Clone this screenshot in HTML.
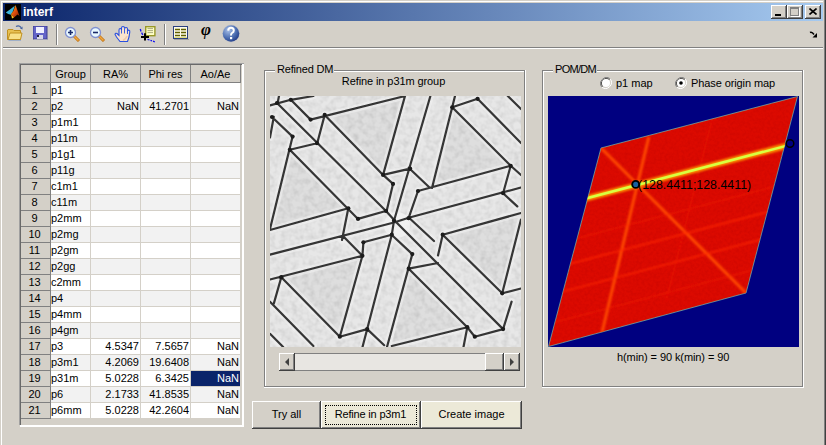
<!DOCTYPE html>
<html><head><meta charset="utf-8"><style>
html,body{margin:0;padding:0;}
body{width:826px;height:445px;overflow:hidden;background:#d4d0c8;position:relative;font-family:"Liberation Sans",sans-serif;font-size:11px;color:#000;}
body div{position:absolute;}
.t{white-space:nowrap;}
.c{text-align:center;}
.r{text-align:right;}
svg{display:block;}
</style></head><body>
<div style="left:0px;top:0px;width:826px;height:1px;background:#d4d0c8;"></div>
<div style="left:1px;top:1px;width:822px;height:1px;background:#fff;"></div>
<div style="left:1px;top:1px;width:1px;height:444px;background:#fff;"></div>
<div style="left:824px;top:0px;width:1px;height:445px;background:#808080;"></div>
<div style="left:825px;top:0px;width:1px;height:445px;background:#404040;"></div>
<div style="left:3px;top:3px;width:820px;height:18px;background:linear-gradient(to right,#0a246a,#a6caf0);"></div>
<div style="left:5px;top:4px;width:16px;height:16px;background:#000;"></div>
<svg style="position:absolute;left:5px;top:4px" width="16" height="16" viewBox="0 0 16 16">
<defs><linearGradient id="mg" x1="0" y1="0" x2="1" y2="1"><stop offset="0" stop-color="#ffd000"/><stop offset="0.5" stop-color="#e05010"/><stop offset="1" stop-color="#802000"/></linearGradient></defs>
<path d="M0.8 8.5 L5 5.5 L9.8 1.8 L8.2 6.8 L6 10.8 Q3 10.5 0.8 8.5 Z" fill="#3fb4d8"/>
<path d="M10.5 1 L14.5 12 L12.5 10.5 L9 13.5 L6 10 L8.5 7 Z" fill="url(#mg)"/>
<path d="M9 13.5 L7 14.5 L6 10 Z" fill="#ffc020"/>
</svg>
<div class="t" style="left:23px;top:3px;color:#fff;font-weight:bold;font-size:12px;line-height:18px;">interf</div>
<div style="left:771px;top:5px;width:16px;height:14px;background:#d4d0c8;box-shadow:inset -1px -1px #404040, inset 1px 1px #fff, inset -2px -2px #808080, inset 2px 2px #d4d0c8;"><div style="left:4px;top:9px;width:6px;height:2px;background:#000;"></div></div>
<div style="left:787px;top:5px;width:16px;height:14px;background:#d4d0c8;box-shadow:inset -1px -1px #404040, inset 1px 1px #fff, inset -2px -2px #808080, inset 2px 2px #d4d0c8;"><div style="left:3px;top:2px;width:9px;height:9px;box-sizing:border-box;border:1px solid #808080;border-top-width:2px;box-shadow:1px 1px #fff;"></div></div>
<div style="left:805px;top:5px;width:16px;height:14px;background:#d4d0c8;box-shadow:inset -1px -1px #404040, inset 1px 1px #fff, inset -2px -2px #808080, inset 2px 2px #d4d0c8;"><svg style="position:absolute;left:4px;top:3px" width="8" height="7"><path d="M0.5 0.5 L7.5 6.5 M7.5 0.5 L0.5 6.5" stroke="#000" stroke-width="1.6"/></svg></div>
<div style="left:3px;top:47px;width:820px;height:1px;background:#808080;"></div>
<div style="left:3px;top:48px;width:820px;height:1px;background:#fff;"></div>
<div style="left:56px;top:24px;width:1px;height:21px;background:#808080;"></div>
<div style="left:57px;top:24px;width:1px;height:21px;background:#fff;"></div>
<div style="left:164px;top:24px;width:1px;height:21px;background:#808080;"></div>
<div style="left:165px;top:24px;width:1px;height:21px;background:#fff;"></div>
<svg style="position:absolute;left:6px;top:25px" width="18" height="17" viewBox="0 0 18 17">
<path d="M15 2.5 Q13 0 10 1.5" stroke="#4060a0" stroke-width="1.3" fill="none"/>
<path d="M14 3.5 L16.5 1.5 L16.5 4.5 Z" fill="#4060a0"/>
<path d="M2 4.5 L7 4.5 L8 5.5 L14.5 5.5 L14.5 14.5 L1.5 14.5 L1.5 5 Z" fill="#e8c050" stroke="#c09020" stroke-width="1"/>
<path d="M2 14.5 L4 8 L16 8 L14.5 14.5 Z" fill="#f8e088" stroke="#c09020" stroke-width="1"/>
<path d="M2.5 15.5 L15 15.5" stroke="#a0b0c8" stroke-width="1"/>
</svg>
<svg style="position:absolute;left:33px;top:26px" width="15" height="14" viewBox="0 0 15 14">
<rect x="0" y="0" width="14" height="13" fill="#6464c8"/>
<rect x="0" y="0" width="14" height="13" fill="none" stroke="#3c3c90" stroke-width="1"/>
<rect x="3" y="1" width="8" height="6" fill="#f0f0ff"/>
<rect x="4" y="9" width="6" height="4" fill="#d8d8e8"/>
<rect x="4" y="9" width="2" height="2" fill="#202040"/>
<rect x="1" y="13" width="14" height="1" fill="#a0a0b8"/>
</svg>
<svg style="position:absolute;left:63px;top:25px" width="18" height="17" viewBox="0 0 18 17">
<path d="M11 11 L16 16" stroke="#c07010" stroke-width="3"/><path d="M11 11 L15.5 15.5" stroke="#f0a840" stroke-width="1.6"/>
<circle cx="7.5" cy="7.5" r="5" fill="#e8f8ff" stroke="#8090d0" stroke-width="1.3"/><path d="M5 7.5 H10 M7.5 5 V10" stroke="#1a2a6a" stroke-width="1.6"/></svg>
<svg style="position:absolute;left:88px;top:25px" width="18" height="17" viewBox="0 0 18 17">
<path d="M11 11 L16 16" stroke="#c07010" stroke-width="3"/><path d="M11 11 L15.5 15.5" stroke="#f0a840" stroke-width="1.6"/>
<circle cx="7.5" cy="7.5" r="5" fill="#e8f8ff" stroke="#8090d0" stroke-width="1.3"/><path d="M5 7.5 H10" stroke="#1a2a6a" stroke-width="1.6"/></svg>
<svg style="position:absolute;left:114px;top:25px" width="18" height="18" viewBox="0 0 18 18">
<path d="M6 16.5 L2.5 12 L1 9.2 Q1.5 7.6 3 8.5 L5 10.5 L5 5 Q5 3.5 6.3 3.5 Q7.5 3.5 7.5 5 L7.5 3 Q7.5 1.5 9 1.5 Q10.5 1.5 10.5 3 L10.5 3.5 Q11 2.5 12.2 2.5 Q13.5 2.5 13.5 4 L13.5 6 Q14.2 5 15 5.2 Q16 5.5 15.8 6.8 L15 12 L13.5 16.5 Z" fill="#fbe4cc" stroke="#2a50e0" stroke-width="1.1"/>
<path d="M7.5 5 L7.5 8.5 M10.5 3.5 L10.5 8.5 M13.5 6 L13.5 9" stroke="#2a50e0" stroke-width="0.9"/>
<path d="M9 15.5 Q12 14 13 11" stroke="#e8b890" stroke-width="1.5" fill="none" opacity="0.6"/>
</svg>
<svg style="position:absolute;left:139px;top:25px" width="18" height="18" viewBox="0 0 18 18">
<path d="M1.3 4 L2 6.5 M2.6 7.6 L3.8 10" stroke="#1010f0" stroke-width="1.3"/>
<path d="M8.5 14.3 L10.5 15 M11.5 15.4 L13 15.9 M14 16.2 L15.8 16.8" stroke="#1010f0" stroke-width="1.3"/>
<rect x="6.7" y="1.7" width="9.2" height="9" fill="#ffffc8" stroke="#989828" stroke-width="1.4"/>
<path d="M8.5 3.6 H14 M8.5 5.6 H14 M8.5 7.6 H14" stroke="#a0a078" stroke-width="0.9"/>
<path d="M6 8.2 V15.6 M2 11.9 H10" stroke="#000" stroke-width="2"/>
</svg>
<svg style="position:absolute;left:173px;top:26px" width="16" height="14" viewBox="0 0 16 14">
<rect x="0.5" y="0.5" width="14" height="12" fill="#fff" stroke="#2a4080" stroke-width="1"/>
<rect x="1" y="1" width="13" height="11" fill="#fffce8"/><path d="M2 3.5 H7 M8 3.5 H13 M2 6.5 H7 M8 6.5 H13 M2 9.5 H7 M8 9.5 H13" stroke="#606000" stroke-width="1.6"/>
<path d="M1 11.5 H14" stroke="#e0e080" stroke-width="1"/>
<rect x="1" y="13" width="15" height="1" fill="#a0a0a0"/>
</svg>
<div class="t" style="left:201px;top:20px;font-family:'Liberation Serif',serif;font-style:italic;font-weight:bold;font-size:17px;line-height:20px;color:#000;">&#966;</div>
<svg style="position:absolute;left:221px;top:24px" width="20" height="19" viewBox="0 0 20 19">
<defs><radialGradient id="hg" cx="0.35" cy="0.3" r="0.8"><stop offset="0" stop-color="#a8c0e8"/><stop offset="0.6" stop-color="#4a6cb0"/><stop offset="1" stop-color="#1c3480"/></radialGradient></defs>
<circle cx="10" cy="9.5" r="9" fill="#c8c8c8"/>
<circle cx="10" cy="9.5" r="8.3" fill="url(#hg)"/>
<path d="M7.2 6.6 Q7.3 3.8 10 3.8 Q12.8 3.8 12.8 6.4 Q12.8 8 11 9 Q10 9.6 10 11.5" stroke="#fff" stroke-width="2" fill="none"/>
<rect x="9" y="13" width="2.2" height="2.2" fill="#fff"/>
</svg>
<svg style="position:absolute;left:809px;top:31px" width="9" height="7" viewBox="0 0 9 7">
<path d="M1 1.5 Q3 0.5 5 3.5" stroke="#000" stroke-width="1.5" fill="none"/>
<path d="M3.5 6.5 L8 6.5 L8 2 Z" fill="#000"/>
</svg>
<div style="left:19px;top:63px;width:225px;height:1px;background:#a0a0a0;"></div>
<div style="left:19px;top:63px;width:1px;height:362px;background:#a0a0a0;"></div>
<div style="left:20px;top:64px;width:222px;height:1px;background:#696969;"></div>
<div style="left:20px;top:64px;width:1px;height:361px;background:#696969;"></div>
<div style="left:242px;top:64px;width:2px;height:363px;background:#fff;"></div>
<div style="left:20px;top:425px;width:224px;height:2px;background:#fff;"></div>
<div style="left:21px;top:82px;width:220px;height:1px;background:#808080;"></div>
<div style="left:50px;top:65px;width:1px;height:17px;background:#808080;"></div>
<div style="left:90px;top:65px;width:1px;height:17px;background:#808080;"></div>
<div style="left:140px;top:65px;width:1px;height:17px;background:#808080;"></div>
<div style="left:190px;top:65px;width:1px;height:17px;background:#808080;"></div>
<div style="left:240px;top:65px;width:1px;height:17px;background:#808080;"></div>
<div class="t c" style="left:51px;top:65px;width:39px;line-height:18px;">Group</div>
<div class="t c" style="left:91px;top:65px;width:49px;line-height:18px;">RA%</div>
<div class="t c" style="left:141px;top:65px;width:49px;line-height:18px;">Phi res</div>
<div class="t c" style="left:191px;top:65px;width:49px;line-height:18px;">Ao/Ae</div>
<div style="left:51px;top:83px;width:189px;height:15px;background:#fff;"></div>
<div style="left:21px;top:98px;width:30px;height:1px;background:#808080;"></div>
<div style="left:51px;top:98px;width:190px;height:1px;background:#d4d0c8;"></div>
<div class="t c" style="left:20px;top:83px;width:29px;line-height:15px;">1</div>
<div class="t" style="left:51px;top:83px;line-height:15px;">p1</div>
<div style="left:51px;top:99px;width:189px;height:15px;background:#f2f2f2;"></div>
<div style="left:21px;top:114px;width:30px;height:1px;background:#808080;"></div>
<div style="left:51px;top:114px;width:190px;height:1px;background:#d4d0c8;"></div>
<div class="t c" style="left:20px;top:99px;width:29px;line-height:15px;">2</div>
<div class="t" style="left:51px;top:99px;line-height:15px;">p2</div>
<div class="t r" style="left:91px;top:99px;width:48px;line-height:15px;">NaN</div>
<div class="t r" style="left:141px;top:99px;width:48px;line-height:15px;">41.2701</div>
<div class="t r" style="left:191px;top:99px;width:48px;line-height:15px;">NaN</div>
<div style="left:51px;top:115px;width:189px;height:15px;background:#fff;"></div>
<div style="left:21px;top:130px;width:30px;height:1px;background:#808080;"></div>
<div style="left:51px;top:130px;width:190px;height:1px;background:#d4d0c8;"></div>
<div class="t c" style="left:20px;top:115px;width:29px;line-height:15px;">3</div>
<div class="t" style="left:51px;top:115px;line-height:15px;">p1m1</div>
<div style="left:51px;top:131px;width:189px;height:15px;background:#f2f2f2;"></div>
<div style="left:21px;top:146px;width:30px;height:1px;background:#808080;"></div>
<div style="left:51px;top:146px;width:190px;height:1px;background:#d4d0c8;"></div>
<div class="t c" style="left:20px;top:131px;width:29px;line-height:15px;">4</div>
<div class="t" style="left:51px;top:131px;line-height:15px;">p11m</div>
<div style="left:51px;top:147px;width:189px;height:15px;background:#fff;"></div>
<div style="left:21px;top:162px;width:30px;height:1px;background:#808080;"></div>
<div style="left:51px;top:162px;width:190px;height:1px;background:#d4d0c8;"></div>
<div class="t c" style="left:20px;top:147px;width:29px;line-height:15px;">5</div>
<div class="t" style="left:51px;top:147px;line-height:15px;">p1g1</div>
<div style="left:51px;top:163px;width:189px;height:15px;background:#f2f2f2;"></div>
<div style="left:21px;top:178px;width:30px;height:1px;background:#808080;"></div>
<div style="left:51px;top:178px;width:190px;height:1px;background:#d4d0c8;"></div>
<div class="t c" style="left:20px;top:163px;width:29px;line-height:15px;">6</div>
<div class="t" style="left:51px;top:163px;line-height:15px;">p11g</div>
<div style="left:51px;top:179px;width:189px;height:15px;background:#fff;"></div>
<div style="left:21px;top:194px;width:30px;height:1px;background:#808080;"></div>
<div style="left:51px;top:194px;width:190px;height:1px;background:#d4d0c8;"></div>
<div class="t c" style="left:20px;top:179px;width:29px;line-height:15px;">7</div>
<div class="t" style="left:51px;top:179px;line-height:15px;">c1m1</div>
<div style="left:51px;top:195px;width:189px;height:15px;background:#f2f2f2;"></div>
<div style="left:21px;top:210px;width:30px;height:1px;background:#808080;"></div>
<div style="left:51px;top:210px;width:190px;height:1px;background:#d4d0c8;"></div>
<div class="t c" style="left:20px;top:195px;width:29px;line-height:15px;">8</div>
<div class="t" style="left:51px;top:195px;line-height:15px;">c11m</div>
<div style="left:51px;top:211px;width:189px;height:15px;background:#fff;"></div>
<div style="left:21px;top:226px;width:30px;height:1px;background:#808080;"></div>
<div style="left:51px;top:226px;width:190px;height:1px;background:#d4d0c8;"></div>
<div class="t c" style="left:20px;top:211px;width:29px;line-height:15px;">9</div>
<div class="t" style="left:51px;top:211px;line-height:15px;">p2mm</div>
<div style="left:51px;top:227px;width:189px;height:15px;background:#f2f2f2;"></div>
<div style="left:21px;top:242px;width:30px;height:1px;background:#808080;"></div>
<div style="left:51px;top:242px;width:190px;height:1px;background:#d4d0c8;"></div>
<div class="t c" style="left:20px;top:227px;width:29px;line-height:15px;">10</div>
<div class="t" style="left:51px;top:227px;line-height:15px;">p2mg</div>
<div style="left:51px;top:243px;width:189px;height:15px;background:#fff;"></div>
<div style="left:21px;top:258px;width:30px;height:1px;background:#808080;"></div>
<div style="left:51px;top:258px;width:190px;height:1px;background:#d4d0c8;"></div>
<div class="t c" style="left:20px;top:243px;width:29px;line-height:15px;">11</div>
<div class="t" style="left:51px;top:243px;line-height:15px;">p2gm</div>
<div style="left:51px;top:259px;width:189px;height:15px;background:#f2f2f2;"></div>
<div style="left:21px;top:274px;width:30px;height:1px;background:#808080;"></div>
<div style="left:51px;top:274px;width:190px;height:1px;background:#d4d0c8;"></div>
<div class="t c" style="left:20px;top:259px;width:29px;line-height:15px;">12</div>
<div class="t" style="left:51px;top:259px;line-height:15px;">p2gg</div>
<div style="left:51px;top:275px;width:189px;height:15px;background:#fff;"></div>
<div style="left:21px;top:290px;width:30px;height:1px;background:#808080;"></div>
<div style="left:51px;top:290px;width:190px;height:1px;background:#d4d0c8;"></div>
<div class="t c" style="left:20px;top:275px;width:29px;line-height:15px;">13</div>
<div class="t" style="left:51px;top:275px;line-height:15px;">c2mm</div>
<div style="left:51px;top:291px;width:189px;height:15px;background:#f2f2f2;"></div>
<div style="left:21px;top:306px;width:30px;height:1px;background:#808080;"></div>
<div style="left:51px;top:306px;width:190px;height:1px;background:#d4d0c8;"></div>
<div class="t c" style="left:20px;top:291px;width:29px;line-height:15px;">14</div>
<div class="t" style="left:51px;top:291px;line-height:15px;">p4</div>
<div style="left:51px;top:307px;width:189px;height:15px;background:#fff;"></div>
<div style="left:21px;top:322px;width:30px;height:1px;background:#808080;"></div>
<div style="left:51px;top:322px;width:190px;height:1px;background:#d4d0c8;"></div>
<div class="t c" style="left:20px;top:307px;width:29px;line-height:15px;">15</div>
<div class="t" style="left:51px;top:307px;line-height:15px;">p4mm</div>
<div style="left:51px;top:323px;width:189px;height:15px;background:#f2f2f2;"></div>
<div style="left:21px;top:338px;width:30px;height:1px;background:#808080;"></div>
<div style="left:51px;top:338px;width:190px;height:1px;background:#d4d0c8;"></div>
<div class="t c" style="left:20px;top:323px;width:29px;line-height:15px;">16</div>
<div class="t" style="left:51px;top:323px;line-height:15px;">p4gm</div>
<div style="left:51px;top:339px;width:189px;height:15px;background:#fff;"></div>
<div style="left:21px;top:354px;width:30px;height:1px;background:#808080;"></div>
<div style="left:51px;top:354px;width:190px;height:1px;background:#d4d0c8;"></div>
<div class="t c" style="left:20px;top:339px;width:29px;line-height:15px;">17</div>
<div class="t" style="left:51px;top:339px;line-height:15px;">p3</div>
<div class="t r" style="left:91px;top:339px;width:48px;line-height:15px;">4.5347</div>
<div class="t r" style="left:141px;top:339px;width:48px;line-height:15px;">7.5657</div>
<div class="t r" style="left:191px;top:339px;width:48px;line-height:15px;">NaN</div>
<div style="left:51px;top:355px;width:189px;height:15px;background:#f2f2f2;"></div>
<div style="left:21px;top:370px;width:30px;height:1px;background:#808080;"></div>
<div style="left:51px;top:370px;width:190px;height:1px;background:#d4d0c8;"></div>
<div class="t c" style="left:20px;top:355px;width:29px;line-height:15px;">18</div>
<div class="t" style="left:51px;top:355px;line-height:15px;">p3m1</div>
<div class="t r" style="left:91px;top:355px;width:48px;line-height:15px;">4.2069</div>
<div class="t r" style="left:141px;top:355px;width:48px;line-height:15px;">19.6408</div>
<div class="t r" style="left:191px;top:355px;width:48px;line-height:15px;">NaN</div>
<div style="left:51px;top:371px;width:189px;height:15px;background:#fff;"></div>
<div style="left:21px;top:386px;width:30px;height:1px;background:#808080;"></div>
<div style="left:51px;top:386px;width:190px;height:1px;background:#d4d0c8;"></div>
<div class="t c" style="left:20px;top:371px;width:29px;line-height:15px;">19</div>
<div class="t" style="left:51px;top:371px;line-height:15px;">p31m</div>
<div class="t r" style="left:91px;top:371px;width:48px;line-height:15px;">5.0228</div>
<div class="t r" style="left:141px;top:371px;width:48px;line-height:15px;">6.3425</div>
<div style="left:191px;top:371px;width:49px;height:15px;background:#0a246a;"></div>
<div class="t r" style="left:191px;top:371px;width:48px;line-height:15px;color:#fff;">NaN</div>
<div style="left:51px;top:387px;width:189px;height:15px;background:#f2f2f2;"></div>
<div style="left:21px;top:402px;width:30px;height:1px;background:#808080;"></div>
<div style="left:51px;top:402px;width:190px;height:1px;background:#d4d0c8;"></div>
<div class="t c" style="left:20px;top:387px;width:29px;line-height:15px;">20</div>
<div class="t" style="left:51px;top:387px;line-height:15px;">p6</div>
<div class="t r" style="left:91px;top:387px;width:48px;line-height:15px;">2.1733</div>
<div class="t r" style="left:141px;top:387px;width:48px;line-height:15px;">41.8535</div>
<div class="t r" style="left:191px;top:387px;width:48px;line-height:15px;">NaN</div>
<div style="left:51px;top:403px;width:189px;height:15px;background:#fff;"></div>
<div style="left:21px;top:418px;width:30px;height:1px;background:#808080;"></div>
<div style="left:51px;top:418px;width:190px;height:1px;background:#d4d0c8;"></div>
<div class="t c" style="left:20px;top:403px;width:29px;line-height:15px;">21</div>
<div class="t" style="left:51px;top:403px;line-height:15px;">p6mm</div>
<div class="t r" style="left:91px;top:403px;width:48px;line-height:15px;">5.0228</div>
<div class="t r" style="left:141px;top:403px;width:48px;line-height:15px;">42.2604</div>
<div class="t r" style="left:191px;top:403px;width:48px;line-height:15px;">NaN</div>
<div style="left:90px;top:83px;width:1px;height:336px;background:#d4d0c8;"></div>
<div style="left:140px;top:83px;width:1px;height:336px;background:#d4d0c8;"></div>
<div style="left:190px;top:83px;width:1px;height:336px;background:#d4d0c8;"></div>
<div style="left:240px;top:83px;width:1px;height:336px;background:#d4d0c8;"></div>
<div style="left:50px;top:83px;width:1px;height:336px;background:#808080;"></div>
<div style="left:264px;top:70px;width:11px;height:1px;background:#808080;"></div><div style="left:265px;top:71px;width:10px;height:1px;background:#fff;"></div><div style="left:334px;top:70px;width:191px;height:1px;background:#808080;"></div><div style="left:334px;top:71px;width:191px;height:1px;background:#fff;"></div><div style="left:264px;top:70px;width:1px;height:317px;background:#808080;"></div><div style="left:265px;top:71px;width:1px;height:316px;background:#fff;"></div><div style="left:524px;top:70px;width:1px;height:317px;background:#808080;"></div><div style="left:525px;top:70px;width:1px;height:318px;background:#fff;"></div><div style="left:264px;top:386px;width:261px;height:1px;background:#808080;"></div><div style="left:264px;top:387px;width:262px;height:1px;background:#fff;"></div>
<div class="t" style="left:277px;top:62px;line-height:15px;letter-spacing:-0.18px;">Refined DM</div>
<div class="t c" style="left:268px;top:74px;width:251px;line-height:15px;letter-spacing:-0.09px;">Refine in p31m group</div>
<svg style="position:absolute;left:270px;top:96px" width="251" height="251" viewBox="0 0 251 251">
<defs><filter id="dmb"><feGaussianBlur stdDeviation="0.55"/></filter>
<filter id="dmn" x="0" y="0" width="100%" height="100%"><feTurbulence type="fractalNoise" baseFrequency="0.18" numOctaves="2" seed="3"/><feColorMatrix type="matrix" values="1 0 0 0 0.36  1 0 0 0 0.36  1 0 0 0 0.36  0 0 0 0 0.3"/></filter></defs>
<rect width="251" height="251" fill="#dcdcdc"/>
<g fill="#d0d0d0"><path d="M20.0 53.0 L78.3 112.3 L2.0 133.5 Z"/><path d="M54.7 18.9 L135.0 0.0 L113.1 78.9 Z"/><path d="M11.3 181.2 L90.2 159.3 L69.8 240.7 Z"/><path d="M182.2 11.3 L240.7 69.8 L160.0 91.5 Z"/><path d="M172.7 138.7 L252.0 116.5 L232.2 197.3 Z"/><path d="M138.7 172.7 L197.3 231.2 L121.8 250.0 Z"/></g>
<rect width="251" height="251" filter="url(#dmn)"/>
<circle cx="127" cy="129" r="13" fill="#f6f6f6" opacity="0.7" filter="url(#dmb)"/>
<g filter="url(#dmb)">
<path d="M7.0 7.0L116.0 115.0 M2.0 21.0L22.6 40.6 M20.8 3.8L40.6 23.6 M54.7 18.9L113.1 78.9 M19.8 53.8L88.0 122.9 M40.6 23.6L135.0 0.0 M20.8 3.8L43.4 0.0 M19.8 53.8L47.0 47.2 M54.7 18.9L47.2 47.2 M22.6 40.6L0.0 133.0 M3.8 20.8L0.0 41.5 M0.0 9.4L20.8 3.8 M7.5 7.5L9.0 0.0 M135.0 0.0L113.1 78.9 M160.4 0.0L124.0 124.7 M185.0 0.0L162.0 92.0 M148.0 95.0L138.6 122.2 M113.1 78.9L140.1 72.6 M138.7 71.7L159.5 91.5 M182.2 11.3L207.6 2.8 M182.2 11.3L240.7 69.8 M207.6 2.8L251.0 47.0 M237.8 0.0L251.0 13.0 M148.0 95.0L240.7 69.8 M240.7 69.8L233.1 97.2 M240.7 69.8L251.0 79.0 M0.0 134.0L78.3 112.3 M0.0 158.6L124.0 126.5 M78.3 112.3L72.0 144.0 M72.7 139.7L92.4 159.8 M113.1 78.9L123.0 87.9 M123.0 87.9L116.7 114.8 M88.0 122.9L116.7 114.8 M138.7 121.7L251.0 91.5 M233.1 97.2L247.3 110.4 M172.7 138.7L251.0 117.0 M251.0 123.6L232.2 197.3 M172.7 138.7L232.2 197.3 M172.7 138.7L168.0 159.5 M0.0 183.5L92.4 159.8 M11.3 181.2L3.8 207.6 M11.3 181.2L69.8 240.7 M0.0 205.7L43.4 250.0 M0.0 237.8L13.2 251.0 M92.4 159.8L69.8 240.7 M93.4 146.3L92.4 159.8 M69.8 240.7L97.2 233.1 M121.8 138.7L92.5 251.0 M93.4 146.3L121.8 138.7 M142.3 158.1L117.0 251.0 M122.1 139.2L142.3 158.1 M139.0 121.7L164.0 145.0 M138.7 172.7L197.3 231.2 M138.7 172.7L168.0 167.0 M97.2 233.1L114.2 249.2 M121.8 250.0L197.3 231.2 M125.5 125.5L233.1 233.1 M232.2 197.3L251.0 192.5 M197.3 231.2L193.5 251.0 M197.3 231.2L204.8 240.7 M204.8 240.7L233.1 233.1 M241.6 205.7L233.1 233.1 M116.0 115.0L125.5 125.5 M124.0 124.7L121.8 138.7 M124.0 126.5L138.7 121.7" stroke="#f2f2f2" stroke-width="7" stroke-linecap="round" fill="none" opacity="0.55"/>
<path d="M7.0 7.0L116.0 115.0 M2.0 21.0L22.6 40.6 M20.8 3.8L40.6 23.6 M54.7 18.9L113.1 78.9 M19.8 53.8L88.0 122.9 M40.6 23.6L135.0 0.0 M20.8 3.8L43.4 0.0 M19.8 53.8L47.0 47.2 M54.7 18.9L47.2 47.2 M22.6 40.6L0.0 133.0 M3.8 20.8L0.0 41.5 M0.0 9.4L20.8 3.8 M7.5 7.5L9.0 0.0 M135.0 0.0L113.1 78.9 M160.4 0.0L124.0 124.7 M185.0 0.0L162.0 92.0 M148.0 95.0L138.6 122.2 M113.1 78.9L140.1 72.6 M138.7 71.7L159.5 91.5 M182.2 11.3L207.6 2.8 M182.2 11.3L240.7 69.8 M207.6 2.8L251.0 47.0 M237.8 0.0L251.0 13.0 M148.0 95.0L240.7 69.8 M240.7 69.8L233.1 97.2 M240.7 69.8L251.0 79.0 M0.0 134.0L78.3 112.3 M0.0 158.6L124.0 126.5 M78.3 112.3L72.0 144.0 M72.7 139.7L92.4 159.8 M113.1 78.9L123.0 87.9 M123.0 87.9L116.7 114.8 M88.0 122.9L116.7 114.8 M138.7 121.7L251.0 91.5 M233.1 97.2L247.3 110.4 M172.7 138.7L251.0 117.0 M251.0 123.6L232.2 197.3 M172.7 138.7L232.2 197.3 M172.7 138.7L168.0 159.5 M0.0 183.5L92.4 159.8 M11.3 181.2L3.8 207.6 M11.3 181.2L69.8 240.7 M0.0 205.7L43.4 250.0 M0.0 237.8L13.2 251.0 M92.4 159.8L69.8 240.7 M93.4 146.3L92.4 159.8 M69.8 240.7L97.2 233.1 M121.8 138.7L92.5 251.0 M93.4 146.3L121.8 138.7 M142.3 158.1L117.0 251.0 M122.1 139.2L142.3 158.1 M139.0 121.7L164.0 145.0 M138.7 172.7L197.3 231.2 M138.7 172.7L168.0 167.0 M97.2 233.1L114.2 249.2 M121.8 250.0L197.3 231.2 M125.5 125.5L233.1 233.1 M232.2 197.3L251.0 192.5 M197.3 231.2L193.5 251.0 M197.3 231.2L204.8 240.7 M204.8 240.7L233.1 233.1 M241.6 205.7L233.1 233.1 M116.0 115.0L125.5 125.5 M124.0 124.7L121.8 138.7 M124.0 126.5L138.7 121.7" stroke="#363636" stroke-width="2.2" stroke-linecap="round" fill="none"/>
<g fill="#1a1a1a"><circle cx="7.0" cy="7.0" r="2.1"/><circle cx="116.0" cy="115.0" r="2.1"/><circle cx="2.0" cy="21.0" r="2.1"/><circle cx="22.6" cy="40.6" r="2.1"/><circle cx="20.8" cy="3.8" r="2.1"/><circle cx="40.6" cy="23.6" r="2.1"/><circle cx="54.7" cy="18.9" r="2.1"/><circle cx="113.1" cy="78.9" r="2.1"/><circle cx="19.8" cy="53.8" r="2.1"/><circle cx="88.0" cy="122.9" r="2.1"/><circle cx="47.0" cy="47.2" r="2.1"/><circle cx="124.0" cy="124.7" r="2.1"/><circle cx="148.0" cy="95.0" r="2.1"/><circle cx="138.6" cy="122.2" r="2.1"/><circle cx="140.1" cy="72.6" r="2.1"/><circle cx="182.2" cy="11.3" r="2.1"/><circle cx="207.6" cy="2.8" r="2.1"/><circle cx="240.7" cy="69.8" r="2.1"/><circle cx="233.1" cy="97.2" r="2.1"/><circle cx="78.3" cy="112.3" r="2.1"/><circle cx="92.4" cy="159.8" r="2.1"/><circle cx="123.0" cy="87.9" r="2.1"/><circle cx="172.7" cy="138.7" r="2.1"/><circle cx="232.2" cy="197.3" r="2.1"/><circle cx="11.3" cy="181.2" r="2.1"/><circle cx="69.8" cy="240.7" r="2.1"/><circle cx="93.4" cy="146.3" r="2.1"/><circle cx="97.2" cy="233.1" r="2.1"/><circle cx="121.8" cy="138.7" r="2.1"/><circle cx="142.3" cy="158.1" r="2.1"/><circle cx="138.7" cy="172.7" r="2.1"/><circle cx="197.3" cy="231.2" r="2.1"/><circle cx="233.1" cy="233.1" r="2.1"/><circle cx="204.8" cy="240.7" r="2.1"/></g>
</g>
</svg>
<div style="left:279px;top:353px;width:241px;height:18px;background:#e8e6e2;"></div>
<div style="left:279px;top:353px;width:241px;height:1px;background:#808080;"></div>
<div style="left:279px;top:370px;width:241px;height:1px;background:#808080;"></div>
<div style="left:279px;top:353px;width:16px;height:18px;background:#d4d0c8;box-shadow:inset -1px -1px #404040, inset 1px 1px #fff, inset -2px -2px #808080;"><svg style="position:absolute;left:6px;top:5px" width="5" height="8"><path d="M4 0 L0 4 L4 8 Z" fill="#404040"/></svg></div>
<div style="left:485px;top:353px;width:19px;height:18px;background:#d4d0c8;box-shadow:inset -1px -1px #404040, inset 1px 1px #fff, inset -2px -2px #808080;"></div>
<div style="left:504px;top:353px;width:16px;height:18px;background:#d4d0c8;box-shadow:inset -1px -1px #404040, inset 1px 1px #fff, inset -2px -2px #808080;"><svg style="position:absolute;left:6px;top:5px" width="5" height="8"><path d="M0 0 L4 4 L0 8 Z" fill="#404040"/></svg></div>
<div style="left:542px;top:70px;width:11px;height:1px;background:#808080;"></div><div style="left:543px;top:71px;width:10px;height:1px;background:#fff;"></div><div style="left:597px;top:70px;width:206px;height:1px;background:#808080;"></div><div style="left:597px;top:71px;width:206px;height:1px;background:#fff;"></div><div style="left:542px;top:70px;width:1px;height:317px;background:#808080;"></div><div style="left:543px;top:71px;width:1px;height:316px;background:#fff;"></div><div style="left:802px;top:70px;width:1px;height:317px;background:#808080;"></div><div style="left:803px;top:70px;width:1px;height:318px;background:#fff;"></div><div style="left:542px;top:386px;width:261px;height:1px;background:#808080;"></div><div style="left:542px;top:387px;width:262px;height:1px;background:#fff;"></div>
<div class="t" style="left:555px;top:62px;line-height:15px;letter-spacing:-0.7px;">POM/DM</div>
<svg style="position:absolute;left:600px;top:77px" width="12" height="12" viewBox="0 0 12 12">
<path d="M10.2 1.8 A6 6 0 0 0 1.8 10.2" stroke="#808080" stroke-width="1" fill="none"/>
<path d="M1.8 10.2 A6 6 0 0 0 10.2 1.8" stroke="#fff" stroke-width="1" fill="none"/>
<path d="M9.5 2.5 A5 5 0 0 0 2.5 9.5" stroke="#404040" stroke-width="1" fill="none"/>
<circle cx="6" cy="6" r="4" fill="#fff"/></svg>
<div class="t" style="left:616px;top:76px;line-height:15px;">p1 map</div>
<svg style="position:absolute;left:675px;top:77px" width="12" height="12" viewBox="0 0 12 12">
<path d="M10.2 1.8 A6 6 0 0 0 1.8 10.2" stroke="#808080" stroke-width="1" fill="none"/>
<path d="M1.8 10.2 A6 6 0 0 0 10.2 1.8" stroke="#fff" stroke-width="1" fill="none"/>
<path d="M9.5 2.5 A5 5 0 0 0 2.5 9.5" stroke="#404040" stroke-width="1" fill="none"/>
<circle cx="6" cy="6" r="4" fill="#fff"/><circle cx="6" cy="6" r="1.8" fill="#000"/></svg>
<div class="t" style="left:691px;top:76px;line-height:15px;letter-spacing:-0.1px;">Phase origin map</div>
<svg style="position:absolute;left:548px;top:96px" width="251" height="251" viewBox="0 0 251 251">
<defs>
<filter id="blur1" x="-10%" y="-10%" width="120%" height="120%"><feGaussianBlur stdDeviation="1.1"/></filter>
<filter id="pn" x="0" y="0" width="100%" height="100%"><feTurbulence type="fractalNoise" baseFrequency="0.35" numOctaves="2" seed="7"/><feColorMatrix type="matrix" values="0 0 0 0 0.45  0 0 0 0 0  0 0 0 0 0  0.9 0 0 0 -0.35"/></filter>
<clipPath id="pc"><path d="M53 52 L249.5 0.5 L198 197 L0.5 250.5 Z"/></clipPath>
</defs>
<rect width="251" height="251" fill="#000080"/>
<path d="M53 52 L249.5 0.5 L198 197 L0.5 250.5 Z" fill="#dc0a00" stroke="#70d8c0" stroke-width="0.8" stroke-opacity="0.8"/>
<g clip-path="url(#pc)">
<rect width="251" height="251" filter="url(#pn)" opacity="0.6"/>
<g filter="url(#blur1)">
<path d="M53 52 L198 197" stroke="#ff4800" stroke-width="3"/>
<path d="M100.8 40.8 L51 249" stroke="#ff4800" stroke-width="3"/>
<path d="M0 173.6 L251 107.6" stroke="#ff2800" stroke-width="1.8" opacity="0.8"/>
<path d="M0 199.5 L251 133.5" stroke="#ff2800" stroke-width="1.8" opacity="0.8"/>
<path d="M0 150 L251 84" stroke="#f82000" stroke-width="1.4" opacity="0.5"/>
<path d="M0 228 L251 162" stroke="#f82000" stroke-width="1.4" opacity="0.5"/>
<path d="M165 20 L118 205" stroke="#f82000" stroke-width="1.4" opacity="0.4"/>
<path d="M0 112.5 L251 46.5" stroke="#ff9000" stroke-width="6"/>
</g>
<path d="M0 112.5 L251 46.5" stroke="#d8ff40" stroke-width="2.6"/>
</g>
<circle cx="87.7" cy="88.4" r="3.5" fill="#1860a0" stroke="#000" stroke-width="1.9"/>
<circle cx="242" cy="47.5" r="3.8" fill="none" stroke="#000" stroke-width="1.5"/>
<text x="90" y="92.8" font-family="Liberation Sans" font-size="12.4" fill="#000">(128.4411;128.4411)</text>
</svg>

<div class="t" style="left:617px;top:350px;line-height:15px;letter-spacing:-0.09px;">h(min) = 90 k(min) = 90</div>
<div style="left:252px;top:401px;width:69px;height:28px;background:#d4d0c8;box-shadow:inset -1px -1px #404040, inset 1px 1px #fff, inset -2px -2px #808080;"><div class="t c" style="left:0;top:6px;width:69px;line-height:15px;">Try all</div></div>
<div style="left:321px;top:401px;width:100px;height:28px;background:#ece9d8;box-shadow:inset -1px -1px #404040, inset 1px 1px #fff, inset -2px -2px #808080;"><div style="left:4px;top:4px;width:90px;height:18px;border:1px dotted #000;"></div><div class="t c" style="left:0;top:6px;width:100px;line-height:15px;"><span style="letter-spacing:-0.18px;margin-left:-1px">Refine in p3m1</span></div></div>
<div style="left:421px;top:401px;width:101px;height:28px;background:#ece9d8;box-shadow:inset -1px -1px #404040, inset 1px 1px #fff, inset -2px -2px #808080;"><div class="t c" style="left:0;top:6px;width:101px;line-height:15px;">Create image</div></div>
</body></html>
